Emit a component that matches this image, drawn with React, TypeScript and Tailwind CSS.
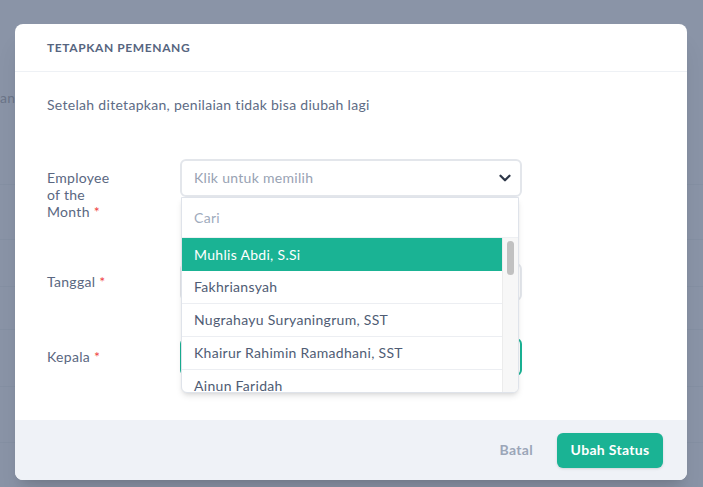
import { ChevronDown } from "lucide-react";

const employees = [
  "Muhlis Abdi, S.Si",
  "Fakhriansyah",
  "Nugrahayu Suryaningrum, SST",
  "Khairur Rahimin Ramadhani, SST",
  "Ainun Faridah",
];

export default function App() {
  return (
    <div className="relative h-[487px] w-[703px] overflow-hidden bg-[#8a94a7] font-['Lato',sans-serif] tracking-[0.3px]">
      {/* page behind the overlay */}
      <div className="pt-[88px] text-sm text-[#6b7589]">
        <div className="h-[20px] leading-5">an</div>
        <div className="h-[77px] border-b border-[#8590a3]" />
        <div className="h-[55px] border-b border-[#8590a3]" />
        <div className="h-[47px] border-b border-[#8590a3]" />
        <div className="h-[43px] border-b border-[#8590a3]" />
        <div className="h-[57px] border-b border-[#8590a3]" />
        <div className="h-[56px] border-b border-[#8590a3]" />
      </div>

      {/* === Modal === */}
      <div className="absolute left-[15px] top-[24px] flex h-[456px] w-[672px] flex-col rounded-lg bg-white shadow-xl">
        {/* Header */}
        <div className="flex h-[48px] items-center border-b border-[#eef1f5] px-8">
          <h2 className="text-[12px] font-bold uppercase tracking-[0.6px] text-[#56657f]">
            Tetapkan Pemenang
          </h2>
        </div>

        {/* Body */}
        <div className="flex-1 px-8 pt-[23px]">
          <p className="text-sm leading-5 text-[#5d6b85]">
            Setelah ditetapkan, penilaian tidak bisa diubah lagi
          </p>

          <div className="mt-[44px]">
            {/* Employee of the Month */}
            <div className="flex h-[104px] items-start">
              <div className="w-[133px] pt-[10px] text-sm leading-[17px] text-[#5a6781]">
                <div>Employee</div>
                <div>of the</div>
                <div className="whitespace-nowrap">
                  Month <span className="text-[#ef4444]">*</span>
                </div>
              </div>
              <div className="relative z-10 w-[342px]">
                <div className="flex h-[38px] items-center justify-between rounded-md border-2 border-[#e3e6eb] bg-white pl-[12px] pr-[6px]">
                  <span className="text-sm text-[#98a2b3]">Klik untuk memilih</span>
                  <ChevronDown size={18} strokeWidth={3} className="text-[#2d3748]" />
                </div>

                {/* Dropdown menu */}
                <div className="absolute left-[1px] top-[38px] w-[338px] overflow-hidden rounded-b-md border border-[#dfe3ea] bg-white shadow-md">
                  <div className="flex h-[40px] items-center border-b border-[#eef0f3] pl-[12px] text-sm text-[#a0abbd]">
                    Cari
                  </div>
                  <div className="flex h-[154px]">
                    <div className="flex-1">
                      {employees.map((name, i) => (
                        <div
                          key={name}
                          className={
                            i === 0
                              ? "flex h-[33px] items-center bg-[#1ab394] pl-[12px] text-sm text-white"
                              : "flex h-[33px] items-center border-b border-[#eceef2] pl-[12px] text-sm text-[#4f5c74]"
                          }
                        >
                          {name}
                        </div>
                      ))}
                    </div>
                    <div className="w-[16px] border-l border-[#ececec] bg-[#f7f7f7] pt-[3px]">
                      <div className="mx-auto h-[34px] w-[7px] rounded-full bg-[#c1c1c1]" />
                    </div>
                  </div>
                </div>
              </div>
            </div>

            {/* Tanggal */}
            <div className="flex h-[75px] items-start">
              <div className="w-[133px] pt-[10px] text-sm leading-[17px] text-[#5a6781]">
                Tanggal <span className="text-[#ef4444]">*</span>
              </div>
              <div className="h-[38px] w-[342px] rounded-md border-2 border-[#e3e6eb] bg-white" />
            </div>

            {/* Kepala */}
            <div className="flex items-start">
              <div className="w-[133px] pt-[10px] text-sm leading-[17px] text-[#5a6781]">
                Kepala <span className="text-[#ef4444]">*</span>
              </div>
              <div className="h-[38px] w-[342px] rounded-md border-2 border-[#1ab394] bg-white" />
            </div>
          </div>
        </div>

        {/* Footer */}
        <div className="flex h-[60px] items-center justify-end gap-[24px] rounded-b-lg bg-[#eff2f7] pr-6">
          <button type="button" className="text-sm font-bold text-[#9ba6b8]">
            Batal
          </button>
          <button
            type="button"
            className="h-[35px] w-[106px] rounded-md bg-[#1ab394] text-sm font-bold text-white shadow-sm"
          >
            Ubah Status
          </button>
        </div>
      </div>
    </div>
  );
}
